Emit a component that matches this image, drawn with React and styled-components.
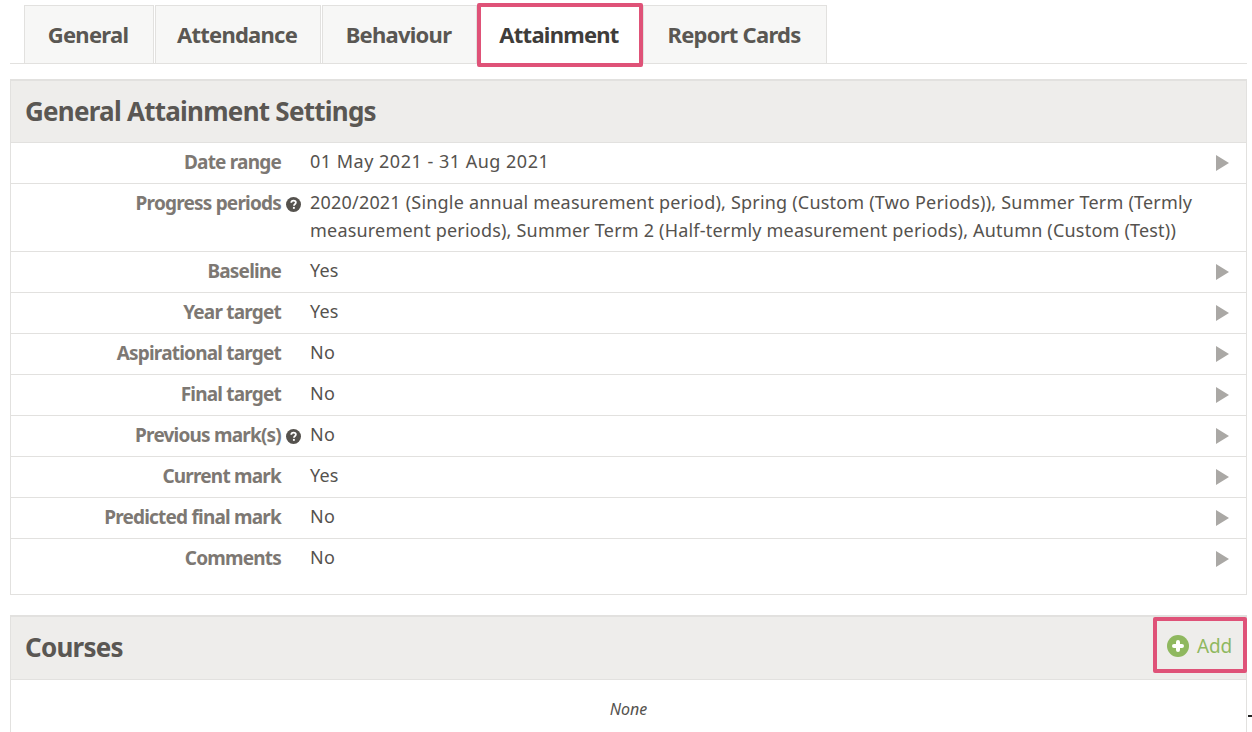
import React from "react";
import styled, { createGlobalStyle } from "styled-components";

const colors = {
  line: "#e2e1df",
  head: "#eeedeb",
  tabBg: "#f7f7f6",
  title: "#5a5753",
  label: "#7d7873",
  value: "#55524e",
  arrow: "#aaa8a5",
  pink: "#df5278",
  green: "#8fb85f",
};

const GlobalStyle = createGlobalStyle`
  html, body {
    margin: 0;
    padding: 0;
    background: #fff;
    overflow: hidden;
  }
  body {
    height: 732px;
    font-family: "Noto Sans", "Open Sans", sans-serif;
  }
`;

const Page = styled.div`
  position: relative;
  width: 1237px;
  height: 727px;
  padding: 5px 0 0 10px;
`;

const TabBar = styled.div`
  display: flex;
  align-items: flex-start;
  height: 58px;
  padding-left: 14px;
  border-bottom: 1px solid ${colors.line};
  margin-bottom: 15px;
`;

const Tab = styled.div`
  box-sizing: border-box;
  width: ${(p) => p.$width}px;
  height: 58px;
  display: flex;
  align-items: center;
  justify-content: center;
  font-size: 22px;
  font-weight: 700;
  letter-spacing: -0.75px;
  padding: 0 2px 2px 0;
  color: ${(p) => (p.$active ? "#3f3d3a" : colors.title)};
  background: ${(p) => (p.$active ? "#fff" : colors.tabBg)};
  border: 1px solid ${colors.line};
  border-bottom: 0;
  margin-right: ${(p) => (p.$gap ? 1 : 0)}px;
  ${(p) =>
    p.$active &&
    `
    height: 64px;
    margin-top: -2px;
    padding-bottom: 2px;
    border: 4px solid ${colors.pink};
    border-radius: 2px;
    position: relative;
    z-index: 1;
  `}
`;

const Panel = styled.section`
  border: 1px solid ${colors.line};
  border-bottom-width: ${(p) => (p.$open ? 0 : 1)}px;
  border-top-width: 2px;

  & + & {
    margin-top: 20px;
  }
`;

const PanelHead = styled.header`
  box-sizing: border-box;
  height: ${(p) => p.$height}px;
  display: flex;
  align-items: center;
  justify-content: space-between;
  padding: 0 0 0 14px;
  background: ${colors.head};
  border-bottom: 1px solid ${colors.line};
`;

const PanelTitle = styled.h2`
  margin: 0 0 2px;
  font-size: 26px;
  font-weight: 700;
  letter-spacing: -0.75px;
  color: ${colors.title};
`;

const Rows = styled.div`
  padding-bottom: 14px;
`;

const Row = styled.div`
  box-sizing: border-box;
  display: grid;
  grid-template-columns: 270px 1fr 18px;
  height: ${(p) => (p.$tall ? 68 : 41)}px;
  padding: 5px 17px 0 0;
  border-bottom: ${(p) => (p.$last ? "0" : `1px solid ${colors.line}`)};
`;

const Label = styled.div`
  display: flex;
  justify-content: flex-end;
  align-items: flex-start;
  font-size: 19px;
  font-weight: 700;
  letter-spacing: -0.8px;
  line-height: 28px;
  color: ${colors.label};
  white-space: nowrap;
`;

const Help = styled.svg`
  width: 15px;
  height: 15px;
  margin: 8px -20px 0 5px;
  flex: none;
`;

const Value = styled.div`
  font-size: 18px;
  letter-spacing: ${(p) => (p.$date ? 0.5 : 0.2)}px;
  line-height: 28px;
  color: ${colors.value};
  margin-top: -1px;
  padding-left: 29px;
`;

const Arrow = styled.div`
  width: 0;
  height: 0;
  justify-self: end;
  margin-top: 7px;
  border-left: 13px solid ${colors.arrow};
  border-top: 8px solid transparent;
  border-bottom: 8px solid transparent;
`;

const AddButton = styled.button`
  box-sizing: border-box;
  width: 94px;
  height: 56px;
  align-self: flex-start;
  margin: 0 -1px 0 0;
  display: flex;
  align-items: center;
  gap: 8px;
  padding: 1px 0 0 10px;
  background: transparent;
  border: 4px solid ${colors.pink};
  border-radius: 2px;
  font-family: inherit;
  font-size: 19px;
  letter-spacing: -0.2px;
  color: ${colors.green};
`;

const PanelBody = styled.div`
  height: 52px;
  padding-top: 16px;
  box-sizing: border-box;
  text-align: center;
  font-size: 16px;
  font-style: italic;
  line-height: 26px;
  color: ${colors.value};
`;

const EdgeMark = styled.div`
  position: absolute;
  top: 715px;
  left: 1248px;
  width: 4px;
  height: 2px;
  background: #222;
`;

const HelpIcon = () => (
  <Help viewBox="0 0 16 16" aria-hidden="true">
    <circle cx="8" cy="8" r="8" fill={colors.value} />
    <path
      d="M5.6 6.2c0-1.5 1.1-2.3 2.5-2.3s2.4.8 2.4 2c0 1.9-2 1.8-2 3.3"
      fill="none"
      stroke="#fff"
      strokeWidth="1.9"
    />
    <rect x="7.4" y="10.6" width="2" height="2" fill="#fff" />
  </Help>
);

const PlusIcon = () => (
  <svg width="22" height="22" viewBox="0 0 22 22" aria-hidden="true">
    <circle cx="11" cy="11" r="11" fill={colors.green} />
    <path d="M11 7v8M7 11h8" stroke="#fff" strokeWidth="4" strokeLinecap="round" />
  </svg>
);

const tabs = [
  { title: "General", width: 130, gap: true },
  { title: "Attendance", width: 166, gap: true },
  { title: "Behaviour", width: 155 },
  { title: "Attainment", width: 166, active: true },
  { title: "Report Cards", width: 184 },
];

const settings = [
  { label: "Date range", value: "01 May 2021 - 31 Aug 2021", arrow: true, date: true },
  {
    label: "Progress periods",
    help: true,
    tall: true,
    value:
      "2020/2021 (Single annual measurement period), Spring (Custom (Two Periods)), Summer Term (Termly measurement periods), Summer Term 2 (Half-termly measurement periods), Autumn (Custom (Test))",
  },
  { label: "Baseline", value: "Yes", arrow: true },
  { label: "Year target", value: "Yes", arrow: true },
  { label: "Aspirational target", value: "No", arrow: true },
  { label: "Final target", value: "No", arrow: true },
  { label: "Previous mark(s)", help: true, value: "No", arrow: true },
  { label: "Current mark", value: "Yes", arrow: true },
  { label: "Predicted final mark", value: "No", arrow: true },
  { label: "Comments", value: "No", arrow: true, last: true },
];

function App() {
  return (
    <Page>
      <GlobalStyle />
      <TabBar>
        {tabs.map((t) => (
          <Tab key={t.title} $width={t.width} $gap={t.gap} $active={t.active}>
            {t.title}
          </Tab>
        ))}
      </TabBar>

      <Panel>
        <PanelHead $height={62}>
          <PanelTitle>General Attainment Settings</PanelTitle>
        </PanelHead>
        <Rows>
          {settings.map((s) => (
            <Row key={s.label} $tall={s.tall} $last={s.last}>
              <Label>
                {s.label}
                {s.help && <HelpIcon />}
              </Label>
              <Value $date={s.date}>{s.value}</Value>
              {s.arrow ? <Arrow /> : <span />}
            </Row>
          ))}
        </Rows>
      </Panel>

      <Panel $open>
        <PanelHead $height={63}>
          <PanelTitle>Courses</PanelTitle>
          <AddButton>
            <PlusIcon />
            Add
          </AddButton>
        </PanelHead>
        <PanelBody>None</PanelBody>
      </Panel>
      <EdgeMark />
    </Page>
  );
}

export default App;
